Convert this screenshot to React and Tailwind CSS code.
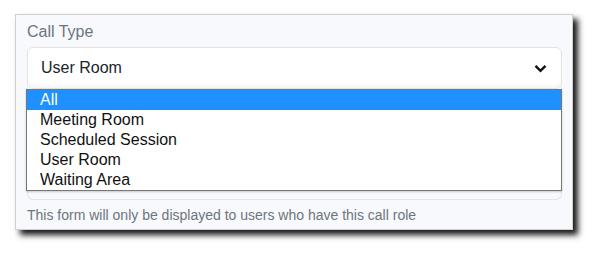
import React from 'react';

const options = ['All', 'Meeting Room', 'Scheduled Session', 'User Room', 'Waiting Area'];

export default function App() {
  return (
    <div className="w-[601px] h-[259px] bg-white pt-[14px] pl-[15px]" style={{ fontFamily: '"Liberation Sans", Arial, sans-serif' }}>
      <div className="w-[558px] h-[216px] bg-[#f8f9fc] border border-[#d0d0d0] shadow-[5px_5px_6px_rgba(0,0,0,0.9)] pl-[11px] pr-[10px] pt-[7px]">
        <div className="text-[16px] leading-[20px] text-[#6c757d]">Call Type</div>
        <div className="relative mt-[5px]">
          <div className="h-[42px] bg-white border border-[#e4e4e4] rounded-[6px] shadow-[inset_0_-3px_3px_rgba(0,0,0,0.04)] flex items-center justify-between pl-[13px] pr-[14px]">
            <span className="text-[16px] text-[#212529]">User Room</span>
            <svg width="13" height="9" viewBox="0 0 13 9" fill="none">
              <path d="M1.5 1.8 L6.5 6.8 L11.5 1.8" stroke="#111" strokeWidth="2.4" />
            </svg>
          </div>
          <div className="h-[113px] mt-[-2px] border border-[#e4e4e4] border-t-0 rounded-b-[6px]" />
          <div className="absolute left-[-1px] top-[42px] w-[536px] bg-white border border-[#767676] shadow-[0_1px_2px_rgba(0,0,0,0.2)]">
            {options.map((o, i) => (
              <div
                key={o}
                className={`h-[20px] leading-[20px] text-[16px] pl-[13px] ${i === 0 ? 'bg-[#1e90ff] text-white' : 'text-[#111]'}`}
              >
                {o}
              </div>
            ))}
          </div>
        </div>
        <div className="mt-[7px] text-[14px] leading-[16px] text-[#6c757d]">
          This form will only be displayed to users who have this call role
        </div>
      </div>
    </div>
  );
}
